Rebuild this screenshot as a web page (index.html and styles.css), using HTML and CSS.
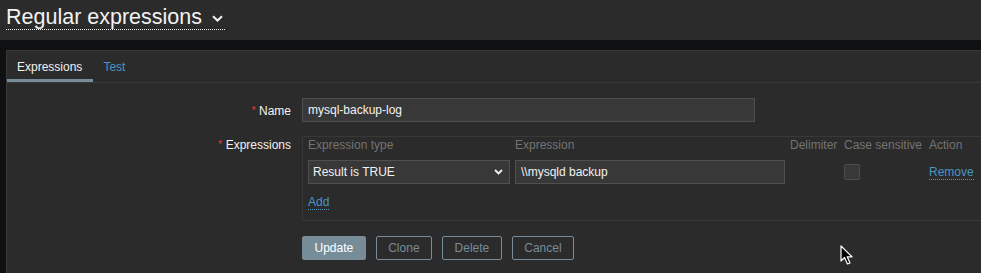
FILE: index.html
```html
<!DOCTYPE html>
<html lang="en">
<head>
    <meta charset="UTF-8">
    <title>Regular expressions</title>
    <link rel="stylesheet" href="styles.css">
</head>
<body>

<header class="header">
    <h1 class="title">
        <span class="title-text">Regular expressions
            <svg class="chevron" width="11" height="7" viewBox="0 0 11 7"><path d="M1 1.2 L5.5 5.5 L10 1.2" fill="none" stroke="#f2f2f2" stroke-width="2"/></svg>
        </span>
    </h1>
</header>

<div class="wrapper">
    <div class="container">
        <ul class="tabs">
            <li class="active">Expressions</li>
            <li><a href="#">Test</a></li>
        </ul>

        <div class="form">
            <label class="label"><i>*</i> Name</label>
            <div class="field">
                <input class="text name" type="text" value="mysql-backup-log">
            </div>

            <label class="label top"><i>*</i> Expressions</label>
            <div class="field">
                <div class="box">
                    <div class="grid">
                        <span class="th">Expression type</span>
                        <span class="th">Expression</span>
                        <span class="th">Delimiter</span>
                        <span class="th">Case sensitive</span>
                        <span class="th">Action</span>

                        <div class="select">
                            <span>Result is TRUE</span>
                            <svg width="9" height="6" viewBox="0 0 9 6"><path d="M1 1 L4.5 4.5 L8 1" fill="none" stroke="#f2f2f2" stroke-width="1.8"/></svg>
                        </div>
                        <input class="text" type="text" value="\\mysqld backup">
                        <span></span>
                        <span class="check"><span class="checkbox"></span></span>
                        <span class="cell"><a href="#" class="link">Remove</a></span>
                    </div>
                    <div class="add"><a href="#" class="link">Add</a></div>
                </div>
            </div>

            <div></div>
            <div class="buttons">
                <button class="btn main">Update</button>
                <button class="btn alt">Clone</button>
                <button class="btn alt">Delete</button>
                <button class="btn alt">Cancel</button>
            </div>
        </div>
    </div>
</div>

<svg class="cursor" width="15" height="21" viewBox="0 0 15 21"><path d="M1 1 L1 16 L4.5 12.5 L7.5 19 L10 18 L7.2 11.8 L12 11.8 Z" fill="#000" stroke="#fff" stroke-width="1.2" stroke-linejoin="round"/></svg>

</body>
</html>
```

FILE: styles.css
```css
* {
    padding: 0;
    margin: 0;
    box-sizing: border-box;
}
body {
    background: #0e1012;
    color: #f2f2f2;
    font-family: Arial, "Liberation Sans", sans-serif;
    font-size: 12px;
    overflow: hidden;
}
.header {
    height: 40px;
    background: #2b2b2b;
    padding: 5px 6px 0;
}
.title {
    font-size: 21.5px;
    font-weight: normal;
    line-height: 24px;
}
.title-text {
    display: inline-block;
    border-bottom: 1px dotted #f2f2f2;
    padding-right: 2px;
}
.chevron {
    margin-left: 4px;
    vertical-align: 2px;
}
.wrapper {
    padding: 10px 0 0 6px;
}
.container {
    background: #2b2b2b;
    border: 1px solid #383838;
    border-right: 0;
    border-bottom: 0;
    height: 223px;
}
.tabs {
    list-style: none;
    display: flex;
    border-bottom: 1px solid #383838;
    height: 32px;
}
.tabs li {
    padding: 9px 11px 0 10px;
    line-height: 14px;
}
.tabs li.active {
    border-bottom: 3px solid #768d99;
}
.tabs a {
    color: #4796c4;
    text-decoration: none;
}
.form {
    display: grid;
    grid-template-columns: 284px 1fr;
    column-gap: 11px;
    row-gap: 13px;
    padding-top: 15px;
}
.field {
    display: flex;
}
.label {
    text-align: right;
    line-height: 24px;
}
.label.top {
    line-height: 16px;
}
.label i {
    color: #e33734;
    font-style: normal;
    font-size: 11px;
    vertical-align: 1px;
}
.text {
    height: 24px;
    background: #383838;
    border: 1px solid #4f4f4f;
    color: #f2f2f2;
    font-family: Arial, "Liberation Sans", sans-serif;
    font-size: 12px;
    padding: 0 5px;
    outline: none;
}
.name {
    width: 453px;
}
.box {
    flex: 1;
    border: 1px solid #383838;
    border-right: 0;
    padding: 0 0 11px 5px;
}
.grid {
    display: grid;
    grid-template-columns: 202px 270px 49px 80px auto;
    column-gap: 5px;
    row-gap: 7px;
    align-items: center;
}
.th {
    color: #737373;
    line-height: 16px;
}
.select {
    height: 24px;
    background: #383838;
    border: 1px solid #4f4f4f;
    display: flex;
    align-items: center;
    justify-content: space-between;
    padding: 0 6px 0 4px;
}
.checkbox {
    display: block;
    width: 16px;
    height: 16px;
    background: #383838;
    border: 1px solid #4f4f4f;
    border-radius: 2px;
}
.link {
    color: #4796c4;
    text-decoration: none;
    border-bottom: 1px dotted #4796c4;
}
.add {
    padding-top: 11px;
    line-height: 14px;
}
.buttons {
    display: flex;
    gap: 10px;
    padding-top: 2px;
}
.btn {
    height: 24px;
    padding: 0 11.5px;
    font-family: Arial, "Liberation Sans", sans-serif;
    font-size: 12px;
    border: 1px solid #768d99;
    border-radius: 2px;
}
.btn.main {
    background: #768d99;
    color: #fff;
}
.btn.alt {
    background: transparent;
    color: #768d99;
}
.cursor {
    position: absolute;
    left: 840px;
    top: 245px;
}
```
